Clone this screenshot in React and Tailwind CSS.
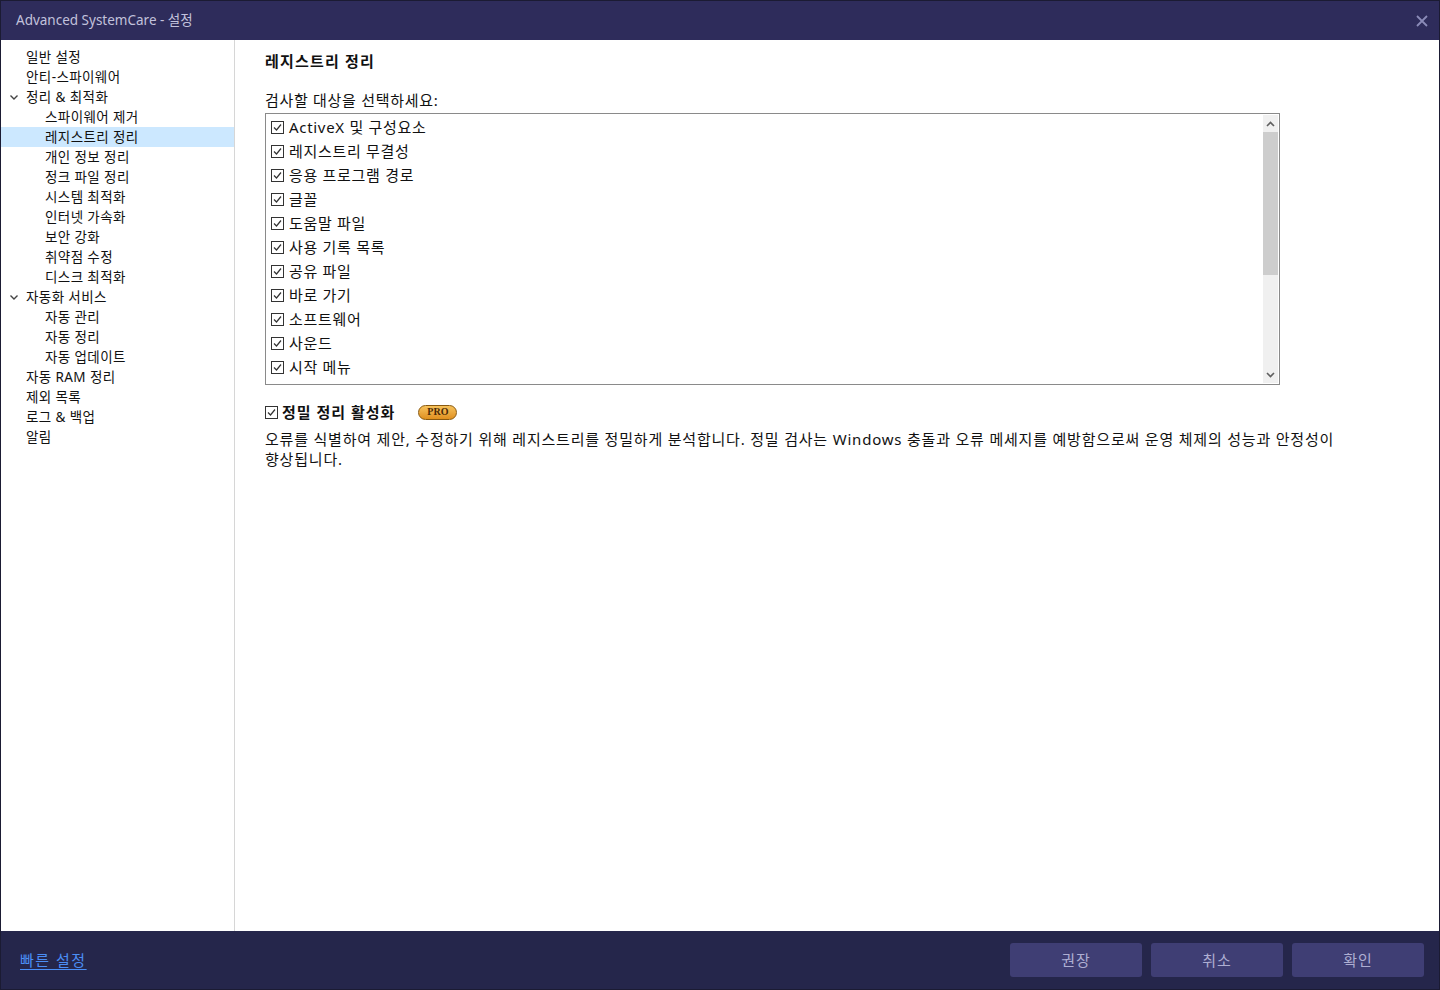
import React from "react";

const font = { fontFamily: '"Noto Sans", "Noto Sans CJK KR", sans-serif' };

const navItems = [
  { text: "일반 설정", level: 1 },
  { text: "안티-스파이웨어", level: 1 },
  { text: "정리 & 최적화", level: 1, open: true },
  { text: "스파이웨어 제거", level: 2 },
  { text: "레지스트리 정리", level: 2, active: true },
  { text: "개인 정보 정리", level: 2 },
  { text: "정크 파일 정리", level: 2 },
  { text: "시스템 최적화", level: 2 },
  { text: "인터넷 가속화", level: 2 },
  { text: "보안 강화", level: 2 },
  { text: "취약점 수정", level: 2 },
  { text: "디스크 최적화", level: 2 },
  { text: "자동화 서비스", level: 1, open: true },
  { text: "자동 관리", level: 2 },
  { text: "자동 정리", level: 2 },
  { text: "자동 업데이트", level: 2 },
  { text: "자동 RAM 정리", level: 1 },
  { text: "제외 목록", level: 1 },
  { text: "로그 & 백업", level: 1 },
  { text: "알림", level: 1 },
];

const scanItems = [
  "ActiveX 및 구성요소",
  "레지스트리 무결성",
  "응용 프로그램 경로",
  "글꼴",
  "도움말 파일",
  "사용 기록 목록",
  "공유 파일",
  "바로 가기",
  "소프트웨어",
  "사운드",
  "시작 메뉴",
];

const CheckBox = () => (
  <span className="w-[13px] h-[13px] border border-[#333] bg-white flex items-center justify-center shrink-0">
    <svg width="9" height="9" viewBox="0 0 9 9">
      <path d="M1 4.5 L3.5 7 L8 1.5" fill="none" stroke="#333" strokeWidth="1.2" />
    </svg>
  </span>
);

const NavItem = ({ item }) => (
  <div
    className={`h-5 flex items-center text-[13.5px] tracking-[0.4px] text-[#111] ${item.active ? "bg-[#cce8ff]" : ""}`}
    style={{ paddingLeft: item.level === 1 ? 25 : 44 }}
  >
    {item.open && (
      <svg className="absolute left-[8px]" width="10" height="10" viewBox="0 0 10 10">
        <path d="M1.5 3.5 L5 7 L8.5 3.5" fill="none" stroke="#444" strokeWidth="1.4" />
      </svg>
    )}
    {item.text}
  </div>
);

export default function App() {
  return (
    <div style={font} className="w-[1440px] h-[990px] flex flex-col border border-[#1b1b33] overflow-hidden bg-white">
      <div className="h-[39px] bg-[#2e2c5b] flex items-center justify-between pl-[15px] pr-[10px] shrink-0">
        <span className="text-[13.5px] text-[#c2c2dc]">Advanced SystemCare - 설정</span>
        <svg width="14" height="14" viewBox="0 0 14 14">
          <path d="M2 2 L12 12 M12 2 L2 12" stroke="#8b8bb8" strokeWidth="1.8" />
        </svg>
      </div>

      <div className="flex-1 flex min-h-0">
        <div className="w-[234px] border-r border-[#d6d6d6] pt-[7px] shrink-0">
          {navItems.map((item) => (
            <div key={item.text} className="relative">
              <NavItem item={item} />
            </div>
          ))}
        </div>

        <div className="flex-1 pl-[30px] pt-[11px] text-[#111] text-[15px] tracking-[0.7px]">
          <div className="font-bold h-5 flex items-center tracking-[1.2px]">레지스트리 정리</div>
          <div className="mt-[19px] h-5 flex items-center">검사할 대상을 선택하세요:</div>
          <div className="mt-[3px] w-[1015px] h-[272px] border border-[#8a8a8a] flex">
            <div className="flex-1 pt-[1px] pl-[5px]">
              {scanItems.map((s) => (
                <div key={s} className="h-6 flex items-center gap-[5px]">
                  <CheckBox />
                  <span>{s}</span>
                </div>
              ))}
            </div>
            <div className="w-[15px] my-[1px] mr-[1px] bg-[#f0f0f0] flex flex-col items-center">
              <div className="h-[17px] flex items-center justify-center">
                <svg width="9" height="6" viewBox="0 0 9 6">
                  <path d="M1 5 L4.5 1.5 L8 5" fill="none" stroke="#606060" strokeWidth="1.6" />
                </svg>
              </div>
              <div className="w-[15px] h-[143px] bg-[#cdcdcd]" />
              <div className="flex-1" />
              <div className="h-[17px] flex items-center justify-center">
                <svg width="9" height="6" viewBox="0 0 9 6">
                  <path d="M1 1 L4.5 4.5 L8 1" fill="none" stroke="#606060" strokeWidth="1.6" />
                </svg>
              </div>
            </div>
          </div>

          <div className="mt-[17px] h-5 flex items-center">
            <CheckBox />
            <span className="ml-[4px] font-bold tracking-[1px]">정밀 정리 활성화</span>
            <span className="ml-[23px] w-[39px] h-[15px] rounded-full border border-[#8a5a10] bg-gradient-to-b from-[#f7c25a] to-[#e0901c] flex items-center justify-center text-[10px] font-bold text-[#4a2a05] leading-none tracking-normal" style={{ fontFamily: '"Liberation Serif", serif' }}>
              PRO
            </span>
          </div>
          <div className="mt-[7px] leading-5 tracking-[0.8px]">
            오류를 식별하여 제안, 수정하기 위해 레지스트리를 정밀하게 분석합니다. 정밀 검사는 Windows 충돌과 오류 메세지를 예방함으로써 운영 체제의 성능과 안정성이
            <br />
            향상됩니다.
          </div>
        </div>
      </div>

      <div className="h-[58px] bg-[#25264b] flex items-center justify-between pl-[19px] pr-[15px] shrink-0">
        <a className="text-[15px] tracking-[1.5px] text-[#4b8ef5] underline underline-offset-[3px]">빠른 설정</a>
        <div className="flex gap-[9px]">
          {["권장", "취소", "확인"].map((b) => (
            <button key={b} className="w-[132px] h-[34px] rounded-[3px] bg-[#3f3e74] text-[15px] tracking-[1px] text-[#aeaed2]">
              {b}
            </button>
          ))}
        </div>
      </div>
    </div>
  );
}
